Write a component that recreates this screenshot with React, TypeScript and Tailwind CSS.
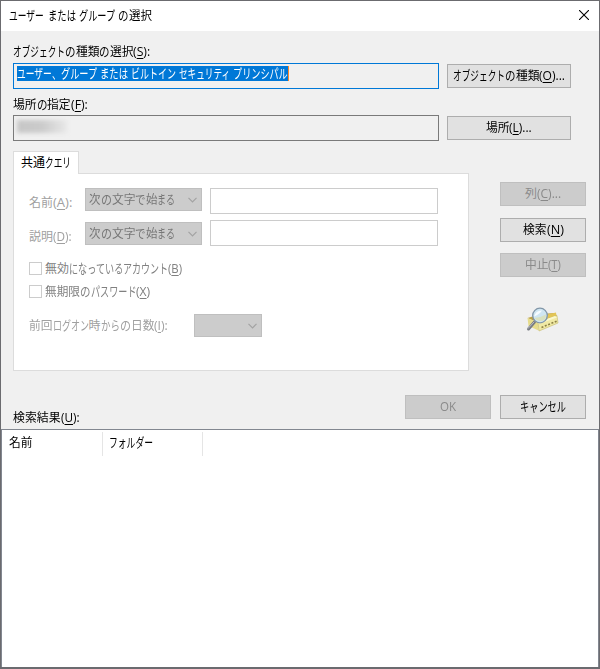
import { useLayoutEffect, useRef } from 'react';
import type { ReactNode } from 'react';
import clsx from 'clsx';

// [text, width in px]; "&" marks the access key
type Run = [string, number];

const KANJI = /^[\u4e00-\u9fff]/;

function FittedRun({ text, width }: { text: string; width: number }) {
  const ref = useRef<HTMLSpanElement>(null);

  useLayoutEffect(() => {
    const el = ref.current;
    if (el && el.offsetWidth) {
      el.style.transform = `scaleX(${width / el.offsetWidth})`;
    }
  }, [text, width]);

  const [before, after] = text.split('&');
  return (
    <span
      className={clsx('block h-4 shrink-0 text-left', KANJI.test(text) ? 'text-[12px]' : '-mt-px text-[13px]')}
      style={{ width }}
    >
      <span ref={ref} className="block h-4 w-max origin-left leading-4 whitespace-pre">
        {before}
        {after && (
          <>
            <span className="underline decoration-1 underline-offset-2">{after[0]}</span>
            {after.slice(1)}
          </>
        )}
      </span>
    </span>
  );
}

function Label({ runs, className }: { runs: Run[]; className?: string }) {
  return (
    <span className={clsx('flex h-4 items-start leading-4', className)}>
      {runs.map(([text, width], i) => (
        <FittedRun key={i} text={text} width={width} />
      ))}
    </span>
  );
}

function Button({ runs, disabled, className }: { runs: Run[]; disabled?: boolean; className?: string }) {
  return (
    <button
      type="button"
      disabled={disabled}
      className={clsx(
        'flex h-6 shrink-0 items-center justify-center border',
        disabled ? 'border-[#bfbfbf] bg-[#cccccc] text-[#8a8a8a]' : 'border-[#adadad] bg-[#e1e1e1] text-black',
        className,
      )}
    >
      <Label runs={runs} />
    </button>
  );
}

function Combo({ runs = [], className }: { runs?: Run[]; className?: string }) {
  return (
    <div
      className={clsx(
        'flex h-[23px] items-center justify-between border border-[#bfbfbf] bg-[#cccccc] pr-1 pl-[3px] text-[#777777]',
        className,
      )}
    >
      <Label runs={runs} />
      <svg width="9" height="6" viewBox="0 0 9 6" fill="none" stroke="#a3a3a3" strokeWidth="1.2">
        <path d="M0.5 0.8 4.5 4.8 8.5 0.8" />
      </svg>
    </div>
  );
}

function CheckRow({ runs }: { runs: Run[] }) {
  return (
    <div className="flex h-[23px] items-center">
      <span className="mr-[3px] size-[13px] border border-[#cccccc] bg-white" />
      <Label runs={runs} className="text-[#808080]" />
    </div>
  );
}

function QueryRow({ children, label, className }: { children?: ReactNode; label: ReactNode; className?: string }) {
  return (
    <div className={clsx('flex h-[26px]', className)}>
      <div className="w-[56px] text-[#a0a0a0]">{label}</div>
      {children}
      <div className="ml-2 h-[26px] w-[228px] border border-[#cccccc] bg-white" />
    </div>
  );
}

function SearchIcon() {
  return (
    <svg width="34" height="26" viewBox="0 0 34 26">
      <path d="M2.5 11 16 7 30 6 32 9 14 16Z" fill="#bda145" />
      <path d="M20 8 31 5.5 31.5 9 20 12Z" fill="#e3c556" />
      <path d="M2.5 11 13 15.5 13.5 23.5 3.5 19Z" fill="#e6dc8c" />
      <path d="M13 15 32 8.5 33 16 14 24Z" fill="#f0e9a4" stroke="#c4b96c" strokeWidth="0.6" />
      <path d="M13 15 30 9 32 10.5 14 17Z" fill="#fbf8cb" />
      <path d="M16.5 20.5 32 14" stroke="#8c8145" strokeWidth="1.6" strokeDasharray="2 1.6" />
      <path d="M9.5 15 3.5 22" stroke="#777b82" strokeWidth="3" strokeLinecap="round" />
      <path d="M9 15 3 21.5" stroke="#b9bdc4" strokeWidth="1" strokeLinecap="round" />
      <circle cx="15" cy="8.5" r="7.3" fill="#cfe6f2" stroke="#8196a8" strokeWidth="1.3" />
      <path d="M9 11Q15 11 21 7.5L20.5 12Q15 17 9 11" fill="#d9e1c0" />
      <path d="M9 9.5Q11 3 17 3.5Q15 7 9 9.5" fill="#f5fbff" />
    </svg>
  );
}

const STARTS_WITH: Run[] = [['次', 11.5], ['の', 11], ['文字', 23.5], ['で', 10.5], ['始', 11.5], ['まる', 18]];

export default function App() {
  return (
    <div className="flex h-[669px] w-[600px] flex-col border border-b-2 border-[#6b6b6f] bg-[#f0f0f0] font-['Open_Sans','Noto_Sans_CJK_JP',sans-serif] text-black">
      <header className="flex h-[30px] items-center justify-between bg-white pr-[10px] pl-2">
        <Label runs={[['ユーザー', 35], [' ', 3.5], ['または', 28], [' ', 3.5], ['グループ', 36], [' ', 3], ['の', 10.5], ['選択', 23]]} />
        <svg className="-mt-[2px]" width="10" height="10" viewBox="0 0 10 10" stroke="#000" strokeWidth="1.1">
          <path d="M0 0 10 10M10 0 0 10" />
        </svg>
      </header>

      <section className="h-[120px] pt-[13px] pl-3">
        <Label runs={[['オブジェクト', 52], ['の', 10.5], ['種類', 23.5], ['の', 10.5], ['選択', 23.5], ['(&S):', 17]]} />
        <div className="mt-[3px] flex h-[26px] items-center">
          <div className="h-[26px] w-[426px] border border-[#0078d7] pt-[2px] pl-[3px]">
            <span className="flex h-[15px] w-[272px] items-center border-r border-[#ff8728] bg-[#0078d7] text-white">
              <Label
                runs={[
                  ['ユーザー', 35], ['、', 9], ['グループ', 36], [' ', 3], ['または', 28], [' ', 3],
                  ['ビルトイン', 45], [' ', 3], ['セキュリティ', 51], [' ', 3], ['プリンシパル', 55],
                ]}
              />
            </span>
          </div>
          <Button className="ml-2 w-[124px]" runs={[['オブジェクト', 52], ['の', 10.5], ['種類', 23.5], ['(&O)...', 26]]} />
        </div>
        <Label className="mt-2" runs={[['場所', 23.5], ['の', 10.5], ['指定', 23.5], ['(&F):', 17]]} />
        <div className="mt-[2px] flex h-[26px] items-center">
          <div className="h-[26px] w-[426px] border border-[#7a7a7a] pt-[4px] pl-[3px]">
            <div className="h-[13px] w-[50px] bg-linear-to-r from-[#c6c6c6] via-[#cbcbcb] to-[#e8e8e8] blur-[2px]" />
          </div>
          <Button className="ml-2 w-[124px]" runs={[['場所', 23.5], ['(&L)...', 23]]} />
        </div>
      </section>

      <section className="flex h-[220px] pl-3">
        <div className="w-[456px]">
          <div className="relative z-10 flex h-[23px] w-[66px] items-center border border-b-0 border-[#dcdcdc] bg-white pb-px pl-[7px]">
            <Label runs={[['共通', 24], ['クエリ', 26]]} />
          </div>
          <div className="-mt-px h-[198px] border border-[#dcdcdc] bg-white pt-[14px] pl-[15px]">
            <QueryRow label={<Label className="pt-[7px]" runs={[['名前', 24], ['(&A):', 19]]} />}>
              <Combo className="w-[117px]" runs={STARTS_WITH} />
            </QueryRow>
            <QueryRow className="mt-[6px]" label={<Label className="pt-[9px]" runs={[['説明', 24], ['(&D):', 19]]} />}>
              <Combo className="mt-[2px] w-[117px]" runs={STARTS_WITH} />
            </QueryRow>
            <div className="mt-[11px]">
              <CheckRow runs={[['無効', 24], ['になっている', 54], ['アカウント', 45], ['(&B)', 14]]} />
              <CheckRow runs={[['無期限', 35], ['の', 10.5], ['パスワード', 45.5], ['(&X)', 14]]} />
            </div>
            <div className="mt-[11px] flex items-center">
              <Label
                className="w-[165px] text-[#a0a0a0]"
                runs={[['前回', 23.5], ['ログオン', 36], ['時', 12], ['から', 19], ['の', 11], ['日数', 23.5], ['(&I):', 14]]}
              />
              <Combo className="w-[68px]" />
            </div>
          </div>
        </div>
        <div className="ml-[31px] flex w-[86px] flex-col pt-[31px]">
          <Button disabled runs={[['列', 12], ['(&C)...', 24]]} />
          <Button className="mt-3" runs={[['検索', 23.5], ['(&N)', 16.5]]} />
          <Button className="mt-[11px]" disabled runs={[['中止', 23.5], ['(&T)', 13]]} />
          <div className="mt-[30px] ml-[25px]">
            <SearchIcon />
          </div>
        </div>
      </section>

      <section className="h-[58px] pt-6">
        <div className="flex justify-end gap-[9px] pr-[13px]">
          <Button className="w-[86px]" disabled runs={[['OK', 16]]} />
          <Button className="w-[86px]" runs={[['キャンセル', 46]]} />
        </div>
        <Label className="-mt-[9px] ml-3" runs={[['検索結果', 47.5], ['(&U):', 19]]} />
      </section>

      <section className="min-h-0 flex-1 border border-b-0 border-[#828790] bg-white">
        <div className="flex h-[26px] items-center pt-[2px]">
          <div className="flex h-6 w-[101px] items-center border-r border-[#e5e5e5] pb-[2px] pl-[7px]">
            <Label runs={[['名前', 23.5]]} />
          </div>
          <div className="flex h-6 w-[100px] items-center border-r border-[#e5e5e5] pb-[2px] pl-[6px]">
            <Label runs={[['フォルダー', 44]]} />
          </div>
        </div>
      </section>
    </div>
  );
}
